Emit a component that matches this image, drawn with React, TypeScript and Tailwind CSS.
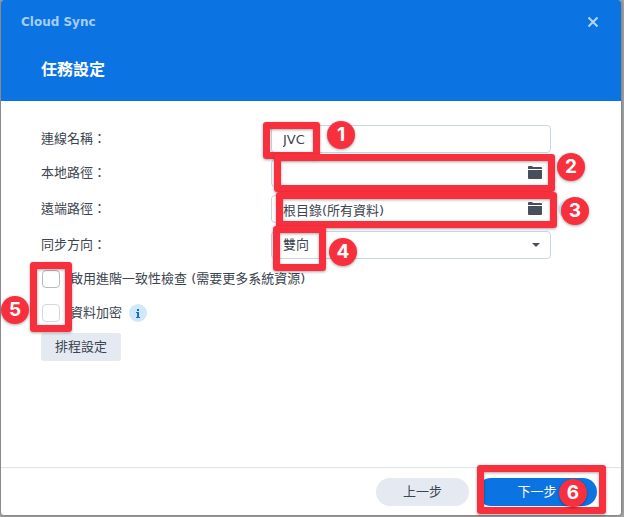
import type { ReactNode } from 'react';

const fieldClass =
  'h-7 w-full rounded-[4px] border border-[#c8d6e3] bg-white px-[11px] text-[13px] leading-5 text-[#3b444f] outline-none';

function Folder() {
  return (
    <svg viewBox="0 0 14 13" className="h-[13px] w-[14px]" fill="#464f5b" aria-hidden="true">
      <path d="M0 3V1Q0 0 1 0H4L5 1H13Q14 1 14 2V3Z" />
      <path d="M0 4H14V12Q14 13 13 13H1Q0 13 0 12Z" />
    </svg>
  );
}

function Row({ id, label, children }: { id: string; label: string; children: ReactNode }) {
  return (
    <div className="flex h-7 items-center">
      <label htmlFor={id} className="w-[230px] shrink-0">
        {label}
      </label>
      <div className="relative w-[280px]">{children}</div>
    </div>
  );
}

function PathField({ id, value }: { id: string; value: string }) {
  return (
    <>
      <input id={id} defaultValue={value} className={`${fieldClass} block pr-8`} />
      <button type="button" aria-label="瀏覽" className="absolute top-[7px] right-[9px]">
        <Folder />
      </button>
    </>
  );
}

function Info() {
  return (
    <span className="flex size-[18px] items-center justify-center rounded-full bg-[#d3e7fb]">
      <svg viewBox="0 0 6 9" className="h-[9px] w-[6px]" fill="#0b74e2" aria-hidden="true">
        <path d="M2 0H4V2H2ZM1 3H4V8H5V9H1V8H2V4H1Z" />
      </svg>
    </span>
  );
}

function Frame({ className }: { className: string }) {
  return (
    <div
      className={`pointer-events-none absolute rounded-[3px] border-[7px] border-[#f8303e] shadow-[0_1px_3px_rgba(0,0,0,0.35),inset_0_1px_3px_rgba(0,0,0,0.35)] ${className}`}
    />
  );
}

function Badge({ n, className }: { n: number; className: string }) {
  return (
    <div
      className={`pointer-events-none absolute flex size-7 items-center justify-center rounded-full bg-[#f8303e] font-[Inter,sans-serif] text-[19px] leading-7 font-bold text-white shadow-[0_1px_3px_rgba(0,0,0,0.35)] ${className}`}
    >
      {n}
    </div>
  );
}

export default function App() {
  return (
    <div className="flex min-h-screen bg-[#a6a6a6] pr-[3px] pb-[2px] pl-px font-['DejaVu_Sans','Noto_Sans_CJK_TC',sans-serif] text-[13px] text-[#3b444f]">
      <div className="relative flex w-full flex-col rounded-[3px] bg-white shadow-[0_0_4px_rgba(0,0,0,0.4)]">
        <header className="h-[101px] rounded-t-[3px] bg-[#0b74e2] pr-[22px] pl-5">
          <div className="flex h-11 items-center justify-between">
            <span className="text-[12px] font-bold text-[#a5cef7]">Cloud Sync</span>
            <button type="button" aria-label="關閉">
              <svg viewBox="0 0 12 12" className="size-3" fill="none" stroke="#b3d6f8" strokeWidth="2" aria-hidden="true">
                <path d="M1.5 1.5L10.5 10.5M10.5 1.5L1.5 10.5" />
              </svg>
            </button>
          </div>
          <h1 className="pt-3 pl-5 font-['Noto_Sans_CJK_TC',sans-serif] text-[16px] leading-6 font-bold text-white">
            任務設定
          </h1>
        </header>

        <main className="grow px-10 pt-6">
          <div className="flex flex-col gap-2">
            <div className="flex flex-col gap-[6px]">
              <Row id="name" label="連線名稱：">
                <input id="name" defaultValue="JVC" className={`${fieldClass} block`} />
              </Row>
              <Row id="local" label="本地路徑：">
                <PathField id="local" value="" />
              </Row>
            </div>
            <div className="flex items-center gap-[7px]">
              <Row id="remote" label="遠端路徑：">
                <PathField id="remote" value="根目錄(所有資料)" />
              </Row>
              <Info />
            </div>
            <Row id="direction" label="同步方向：">
              <select id="direction" className={`${fieldClass} block appearance-none`}>
                <option>雙向</option>
              </select>
              <svg viewBox="0 0 8 4" className="pointer-events-none absolute top-3 right-[11px] h-1 w-2" fill="#464f5b" aria-hidden="true">
                <path d="M0 0H8L4 4Z" />
              </svg>
            </Row>
          </div>
          <div className="mt-[3px] flex h-[34px] items-center gap-[10px] pl-px">
            <input id="check" type="checkbox" className="size-[18px] appearance-none rounded-[4px] border border-[#b4bcc5] bg-white" />
            <label htmlFor="check">啟用進階一致性檢查 (需要更多系統資源)</label>
          </div>
          <div className="flex h-[34px] items-center gap-[10px] pl-px">
            <input id="encrypt" type="checkbox" disabled className="size-[18px] appearance-none rounded-[4px] border border-[#d3d8de] bg-white" />
            <label htmlFor="encrypt">資料加密</label>
            <div className="-ml-[3px]">
              <Info />
            </div>
          </div>
          <button type="button" className="mt-[3px] h-7 w-20 rounded-[3px] bg-[#e5eaf2]">
            排程設定
          </button>
        </main>

        <footer className="flex h-12 items-center justify-end gap-2 border-t border-[#dbe4ea] pr-6">
          <button type="button" className="h-7 w-[93px] rounded-full bg-[#e5eaf2]">
            上一步
          </button>
          <button type="button" className="h-7 w-[120px] rounded-full bg-[#0b74e2] text-white">
            下一步
          </button>
        </footer>

        <Frame className="top-[122px] left-[262px] h-[37px] w-[57px]" />
        <Frame className="top-[154px] left-[273px] h-[38px] w-[281px]" />
        <Frame className="top-[192px] left-[275px] h-[36px] w-[281px]" />
        <Frame className="top-[226px] left-[272px] h-[45px] w-[53px]" />
        <Frame className="top-[262px] left-[29px] h-[70px] w-[42px]" />
        <Frame className="right-[15px] bottom-px h-[49px] w-[129px]" />
        <Badge n={1} className="top-[121px] left-[326px]" />
        <Badge n={2} className="top-[153px] left-[556px]" />
        <Badge n={3} className="top-[197px] left-[560px]" />
        <Badge n={4} className="top-[238px] left-[328px]" />
        <Badge n={5} className="top-[296px] left-0" />
        <Badge n={6} className="right-[34px] bottom-2" />
      </div>
    </div>
  );
}
